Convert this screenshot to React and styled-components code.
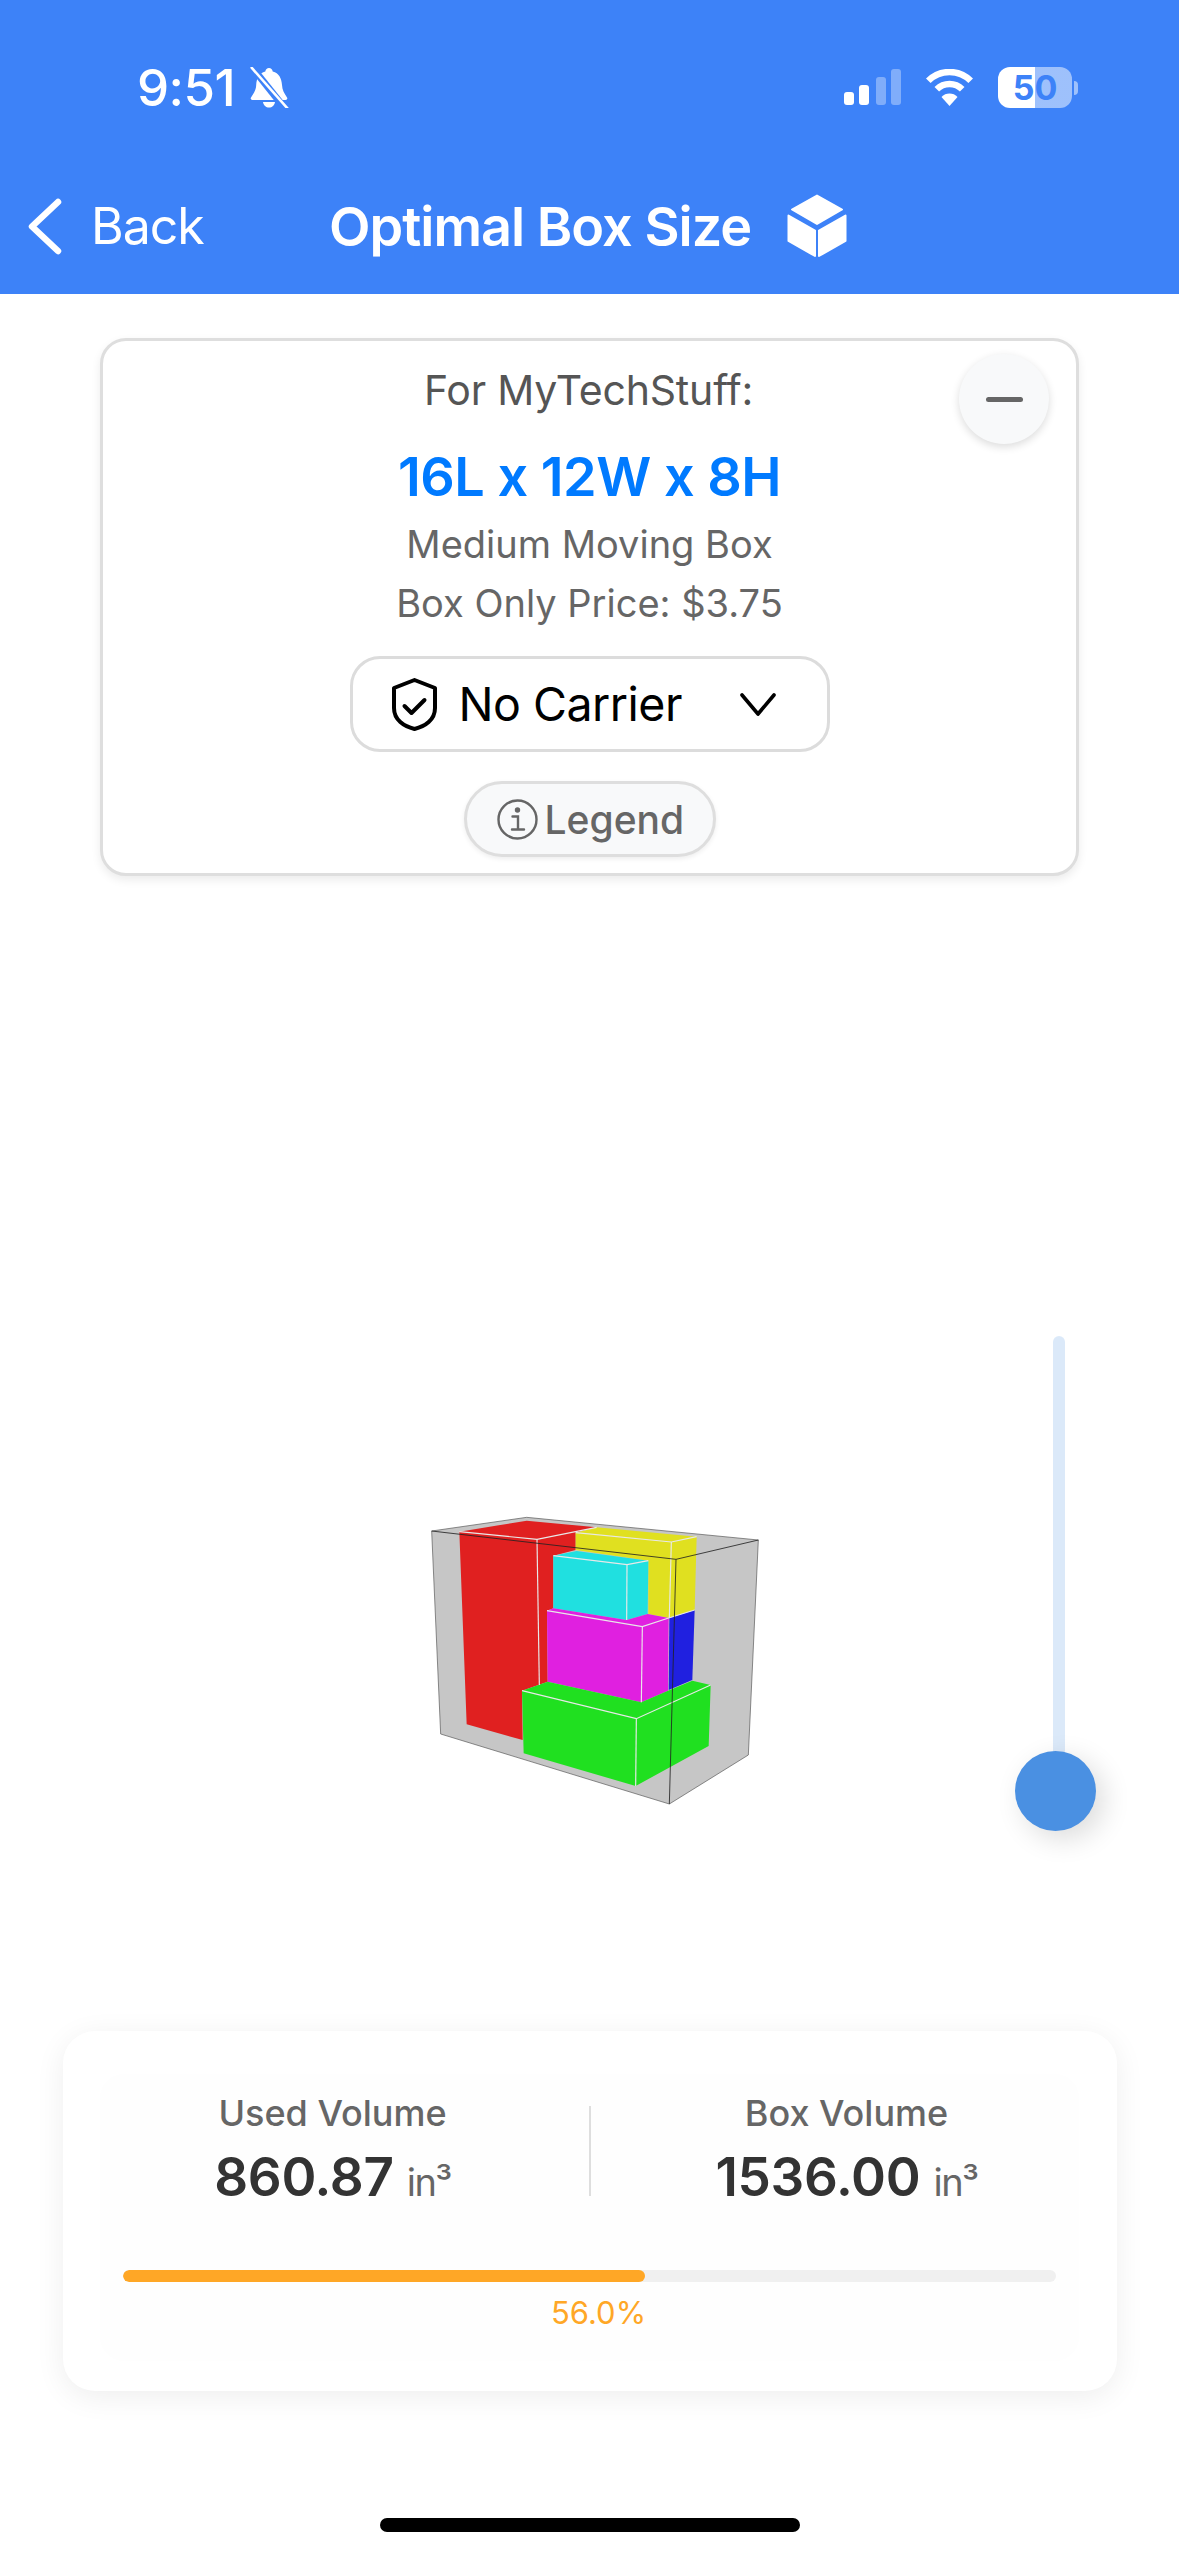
import styled, { createGlobalStyle } from "styled-components";

const GlobalStyle = createGlobalStyle`
  html, body {
    margin: 0;
    padding: 0;
    background: #fff;
  }
  * {
    box-sizing: border-box;
  }
  body {
    font-family: Inter, "Liberation Sans", sans-serif;
  }
`;

function BellSlash() {
  return (
    <BellIcon viewBox="0 0 41 41">
      <path
        d="M20 1c2 0 3.400 1.400 3.700 3.400C30 6 32.500 11 33 18c.3 5 2 8 5 12.500.8 1.500 0 2.500-1.500 2.500H3.500C2 33 1.200 32 2 30.500 5 26 7 23 7.200 18 7.500 11 10.500 6 16.300 4.400 16.700 2.400 18 1 20 1z"
        fill="#fff"
      />
      <path d="M14 35h12c-.5 3.500-3 5.500-6 5.500S14.500 38.500 14 35z" fill="#fff" />
      <path d="M2 -1 L38 44" stroke="#3d82f8" strokeWidth="7" />
      <path d="M2 0 L39 42" stroke="#fff" strokeWidth="2.600" />
    </BellIcon>
  );
}

function SignalBars() {
  return (
    <SignalIcon viewBox="0 0 58 37">
      <rect x="0" y="23" width="10" height="13" rx="3" fill="#fff" />
      <rect x="15" y="16" width="10" height="20" rx="3" fill="#fff" />
      <rect x="32" y="8" width="10" height="28" rx="3" fill="#fff" opacity="0.35" />
      <rect x="47" y="0" width="10" height="36" rx="3" fill="#fff" opacity="0.35" />
    </SignalIcon>
  );
}

function Wifi() {
  return (
    <WifiIcon viewBox="0 0 51 37" fill="none">
      <path d="M4.300 11.800a30 30 0 0 1 42.400 0" stroke="#fff" strokeWidth="6.500" />
      <path d="M12.800 20.300a18 18 0 0 1 25.400 0" stroke="#fff" strokeWidth="6.500" />
      <path d="M25.500 37L17.500 28a11 11 0 0 1 16 0z" fill="#fff" />
    </WifiIcon>
  );
}

function BackChevron() {
  return (
    <BackIcon viewBox="0 0 34 57" fill="none" stroke="#fff" strokeWidth="6.500" strokeLinecap="round" strokeLinejoin="round">
      <path d="M30 4L4 28.500 30 53" />
    </BackIcon>
  );
}

function CubeLogo() {
  return (
    <CubeIcon viewBox="0 0 60 64" fill="#fff" stroke="#fff" strokeWidth="2" strokeLinejoin="round">
      <path d="M30 1.500L55 15.500 30 30 5 15.500z" />
      <path d="M1.500 21.500L28 36.500V62L1.500 47z" />
      <path d="M58.500 21.500L32 36.500V62L58.500 47z" />
    </CubeIcon>
  );
}

function ShieldCheck() {
  return (
    <ShieldIcon viewBox="0 0 47 53" fill="none" stroke="#000" strokeWidth="4" strokeLinejoin="round" strokeLinecap="round">
      <path d="M23.500 2L44 10V30C44 42 34 48.500 23.500 51 13 48.500 3 42 3 30V10z" />
      <path d="M13.500 28L20.500 35 33.500 22" />
    </ShieldIcon>
  );
}

function ChevronDown() {
  return (
    <DownIcon viewBox="0 0 36 23" fill="none" stroke="#000" strokeWidth="3.600" strokeLinecap="round" strokeLinejoin="round">
      <path d="M2 2L18 21 34 2" />
    </DownIcon>
  );
}

function InfoCircle() {
  return (
    <InfoIcon viewBox="0 0 41 41" fill="none" stroke="#666" strokeWidth="2.400">
      <circle cx="20.500" cy="20.500" r="19" />
      <path d="M15.500 17.500h5.500V30M15 30.500h12" strokeLinecap="round" />
      <circle cx="20.500" cy="11" r="1.500" fill="#666" />
    </InfoIcon>
  );
}

// traced from the packed box render, coordinates are 3x the on screen size
function PackedBox() {
  return (
    <BoxDrawing viewBox="0 0 1140 990">
      <polygon points="95,123 380,82 1075,150 1045,795 808,942 122,732" fill="#c6c6c6" />
      <polygon points="178,125 380,92 590,112 527,128 527,180 460,197 460,355 441,362 443,575 415,585 366,602 368,750 200,703" fill="#e02020" />
      <polygon points="527,128 590,112 890,140 884,360 808,384 745,372 745,212 527,180" fill="#e0e020" />
      <polygon points="808,384 884,360 877,570 806,600" fill="#2020e0" />
      <polygon points="460,197 530,183 745,212 743,372 680,390 460,355" fill="#20e0e0" />
      <polygon points="441,362 460,355 680,390 743,372 806,384 804,602 724,637 443,575" fill="#e020e0" />
      <polygon points="366,602 443,575 724,637 804,602 877,572 932,585 926,768 707,888 371,790" fill="#20e020" />
      <g fill="none" stroke="#e8e8e8" strokeWidth="3.500">
        <polyline points="178,125 411,148 590,112" />
        <line x1="411" y1="148" x2="418" y2="585" />
        <polyline points="527,128 814,156 890,140" />
        <line x1="814" y1="156" x2="808" y2="384" />
        <polyline points="460,197 681,224 745,212" />
        <line x1="681" y1="224" x2="680" y2="390" />
        <polyline points="441,362 727,410 806,384" />
        <line x1="727" y1="410" x2="724" y2="637" />
        <line x1="806" y1="384" x2="884" y2="360" />
        <polyline points="366,602 709,686 932,585" />
        <line x1="709" y1="686" x2="707" y2="888" />
      </g>
      <g fill="none" stroke="#555" strokeWidth="2">
        <polyline points="95,123 380,82 1075,150 1045,795 808,942 122,732 95,123" />
      </g>
      <g fill="none" stroke="#222" strokeWidth="2.500">
        <polyline points="95,123 828,208 1075,150" />
        <line x1="828" y1="208" x2="808" y2="942" />
      </g>
    </BoxDrawing>
  );
}

export default function App() {
  const usedPercent = 56;
  return (
    <Page>
      <GlobalStyle />
      <Header>
        <StatusBar>
          <TimeGroup>
            <Time>9:51</Time>
            <BellSlash />
          </TimeGroup>
          <StatusIcons>
            <SignalBars />
            <Wifi />
            <Battery>50</Battery>
            <BatteryNub />
          </StatusIcons>
        </StatusBar>
        <NavRow>
          <BackLink>
            <BackChevron />
            <BackText>Back</BackText>
          </BackLink>
          <Title>Optimal Box Size</Title>
          <CubeLogo />
        </NavRow>
      </Header>

      <InfoCard>
        <CollapseButton>
          <Minus />
        </CollapseButton>
        <ForLabel>For MyTechStuff:</ForLabel>
        <Dimensions>16L x 12W x 8H</Dimensions>
        <Detail>Medium Moving Box</Detail>
        <PriceDetail>Box Only Price: $3.75</PriceDetail>
        <CarrierSelect>
          <ShieldCheck />
          <CarrierName>No Carrier</CarrierName>
          <ChevronDown />
        </CarrierSelect>
        <LegendButton>
          <InfoCircle />
          Legend
        </LegendButton>
      </InfoCard>

      <Viewer>
        <PackedBox />
        <SliderTrack />
        <SliderThumb />
      </Viewer>

      <StatsCard>
        <StatsPanel>
          <StatsRow>
            <Stat>
              <StatLabel>Used Volume</StatLabel>
              <StatValue>
                860.87 <StatUnit>in³</StatUnit>
              </StatValue>
            </Stat>
            <Stat $divided>
              <StatLabel>Box Volume</StatLabel>
              <StatValue>
                1536.00 <StatUnit>in³</StatUnit>
              </StatValue>
            </Stat>
          </StatsRow>
          <ProgressTrack>
            <ProgressFill style={{ width: `${usedPercent}%` }} />
          </ProgressTrack>
          <ProgressLabel>56.0%</ProgressLabel>
        </StatsPanel>
      </StatsCard>

      <HomeIndicator />
    </Page>
  );
}

const Page = styled.div`
  width: 1179px;
  height: 2556px;
  display: flex;
  flex-direction: column;
  background: #fff;
  overflow: hidden;
`;

const Header = styled.header`
  height: 294px;
  flex-shrink: 0;
  background: #3d82f8;
  color: #fff;
  display: flex;
  flex-direction: column;
`;

const StatusBar = styled.div`
  height: 174px;
  padding: 67px 101px 0 137px;
  display: flex;
  justify-content: space-between;
  align-items: flex-start;
`;

const TimeGroup = styled.div`
  display: flex;
  align-items: center;
  gap: 14px;
`;

const Time = styled.span`
  font-size: 51px;
  line-height: 41px;
  font-weight: 500;
  letter-spacing: -0.5px;
`;

const BellIcon = styled.svg`
  width: 41px;
  height: 41px;
`;

const StatusIcons = styled.div`
  display: flex;
  align-items: center;
`;

const SignalIcon = styled.svg`
  width: 58px;
  height: 37px;
  margin-right: 22px;
`;

const WifiIcon = styled.svg`
  width: 51px;
  height: 37px;
  margin-right: 23px;
`;

const Battery = styled.div`
  width: 74px;
  height: 41px;
  border-radius: 12px;
  background: linear-gradient(90deg, #fff 50%, rgba(255, 255, 255, 0.5) 50%);
  color: #3d82f8;
  font-size: 34px;
  font-weight: 700;
  line-height: 41px;
  text-align: center;
`;

const BatteryNub = styled.div`
  width: 4px;
  height: 14px;
  margin-left: 2px;
  border-radius: 0 4px 4px 0;
  background: rgba(255, 255, 255, 0.5);
`;

const NavRow = styled.div`
  display: flex;
  align-items: center;
  height: 100px;
  margin-top: 2px;
`;

const BackLink = styled.div`
  display: flex;
  align-items: center;
  gap: 29px;
  width: 329px;
  padding-left: 28px;
`;

const BackIcon = styled.svg`
  width: 34px;
  height: 57px;
`;

const BackText = styled.span`
  font-size: 50px;
  font-weight: 400;
  letter-spacing: -1px;
`;

const Title = styled.span`
  font-size: 54px;
  font-weight: 600;
  letter-spacing: -1px;
  margin-right: 36px;
`;

const CubeIcon = styled.svg`
  width: 60px;
  height: 64px;
`;

const InfoCard = styled.section`
  position: relative;
  width: 979px;
  height: 538px;
  margin: 44px 0 0 100px;
  flex-shrink: 0;
  padding-top: 25px;
  border: 3px solid #dedede;
  border-radius: 26px;
  background: #fff;
  box-shadow: 0 4px 10px rgba(0, 0, 0, 0.08);
  display: flex;
  flex-direction: column;
  align-items: center;
`;

const CollapseButton = styled.div`
  position: absolute;
  top: 13px;
  right: 27px;
  width: 90px;
  height: 90px;
  border-radius: 50%;
  background: #f8f9fa;
  box-shadow: 0 3px 8px rgba(0, 0, 0, 0.14);
  display: flex;
  align-items: center;
  justify-content: center;
`;

const Minus = styled.div`
  width: 37px;
  height: 5px;
  border-radius: 3px;
  background: #666;
`;

const ForLabel = styled.div`
  font-size: 41px;
  line-height: 48px;
  color: #555;
  letter-spacing: -0.2px;
  margin-right: 2px;
`;

const Dimensions = styled.div`
  margin-top: 31px;
  font-size: 54px;
  line-height: 64px;
  font-weight: 600;
  color: #007aff;
  letter-spacing: -0.5px;
`;

const Detail = styled.div`
  margin-top: 12px;
  font-size: 38px;
  line-height: 46px;
  color: #666;
`;

const PriceDetail = styled(Detail)`
  margin-top: 13px;
`;

const CarrierSelect = styled.div`
  width: 480px;
  height: 96px;
  margin-top: 30px;
  padding: 0 51px 0 38px;
  border: 3px solid #dcdcdc;
  border-radius: 30px;
  display: flex;
  align-items: center;
`;

const ShieldIcon = styled.svg`
  width: 47px;
  height: 53px;
`;

const CarrierName = styled.span`
  flex: 1;
  margin-left: 21px;
  font-size: 46.500px;
  color: #000;
  letter-spacing: -0.5px;
`;

const DownIcon = styled.svg`
  width: 36px;
  height: 23px;
`;

const LegendButton = styled.div`
  width: 252px;
  height: 76px;
  margin-top: 29px;
  padding-left: 30px;
  border: 3px solid #dedede;
  border-radius: 38px;
  background: #f8f9fa;
  box-shadow: 0 2px 5px rgba(0, 0, 0, 0.07);
  display: flex;
  align-items: center;
  gap: 7px;
  font-size: 39px;
  font-weight: 500;
  color: #666;
`;

const InfoIcon = styled.svg`
  width: 41px;
  height: 41px;
`;

const Viewer = styled.div`
  position: relative;
  flex: 1;
  padding: 614px 0 0 400px;
`;

const BoxDrawing = styled.svg`
  display: block;
  width: 380px;
  height: 330px;
`;

const SliderTrack = styled.div`
  position: absolute;
  top: 460px;
  left: 1053px;
  width: 12px;
  height: 430px;
  border-radius: 6px 6px 0 0;
  background: rgba(74, 144, 226, 0.2);
`;

const SliderThumb = styled.div`
  position: absolute;
  top: 875px;
  left: 1015px;
  width: 81px;
  height: 80px;
  border-radius: 50%;
  background: #4a90e2;
  box-shadow: 8px 8px 28px rgba(0, 0, 0, 0.14);
`;

const StatsCard = styled.section`
  width: 1054px;
  height: 360px;
  margin-left: 63px;
  flex-shrink: 0;
  padding: 43px 38px 30px 37px;
  border-radius: 32px;
  background: #fff;
  box-shadow: 0 6px 30px rgba(0, 0, 0, 0.07);
`;

const StatsPanel = styled.div`
  height: 100%;
  border-radius: 24px;
  background: #fefefe;
  display: flex;
  flex-direction: column;
  align-items: center;
`;

const StatsRow = styled.div`
  width: 1028px;
  flex-shrink: 0;
  display: grid;
  grid-template-columns: 1fr 1fr;
  margin-top: 17px;
`;

const Stat = styled.div`
  display: flex;
  flex-direction: column;
  align-items: center;
  position: relative;
  ${(p) =>
    p.$divided &&
    `
    &::before {
      content: "";
      position: absolute;
      top: 15px;
      left: -1px;
      width: 2px;
      height: 90px;
      background: #dedede;
    }
  `}
`;

const StatLabel = styled.div`
  font-size: 36px;
  line-height: 44px;
  font-weight: 500;
  color: #666;
`;

const StatValue = styled.div`
  margin-top: 10px;
  font-size: 53px;
  line-height: 64px;
  font-weight: 600;
  color: #333;
  letter-spacing: -0.3px;
`;

const StatUnit = styled.span`
  font-size: 38px;
  font-weight: 400;
  color: #666;
  letter-spacing: -1.5px;
`;

const ProgressTrack = styled.div`
  width: 933px;
  height: 12px;
  margin-top: 56px;
  border-radius: 6px;
  background: #f0f0f0;
  overflow: hidden;
`;

const ProgressFill = styled.div`
  height: 100%;
  border-radius: 6px;
  background: #ffa726;
`;

const ProgressLabel = styled.div`
  margin: 13px 0 0 18px;
  font-size: 31px;
  line-height: 36px;
  color: #ffa726;
`;

const HomeIndicator = styled.div`
  width: 420px;
  height: 14px;
  margin: 127px 0 24px 380px;
  flex-shrink: 0;
  border-radius: 7px;
  background: #000;
`;
